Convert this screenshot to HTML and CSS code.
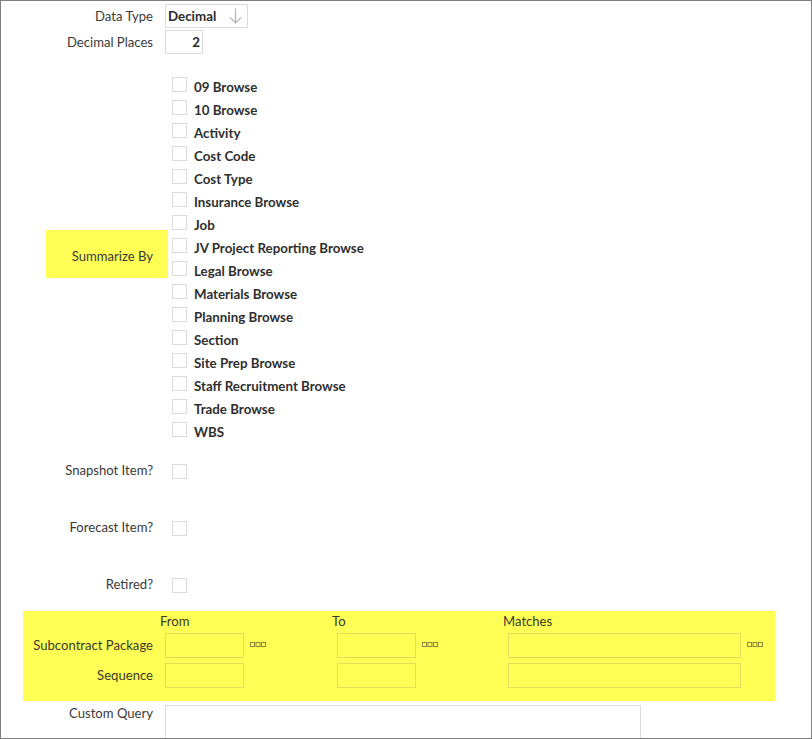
FILE: index.html
```html
<!DOCTYPE html>
<html>
<head>
<meta charset="utf-8">
<link rel="stylesheet" href="styles.css">
</head>
<body>
<div class="frame">
  <div class="row row-type">
    <div class="label">Data Type</div>
    <div class="select">
      <span class="select-value">Decimal</span>
      <svg class="select-arrow" width="13" height="16" viewBox="0 0 13 16"><path d="M6.5 0.5V15M0.8 9.3L6.5 15L12.2 9.3" fill="none" stroke="#b4b4b4" stroke-width="1.2"/></svg>
    </div>
  </div>
  <div class="row row-places">
    <div class="label">Decimal Places</div>
    <div class="num">2</div>
  </div>

  <div class="row row-summarize">
    <div class="label"><div class="hl">Summarize By</div></div>
    <ul class="checklist">
      <li><span class="cb"></span>09 Browse</li>
      <li><span class="cb"></span>10 Browse</li>
      <li><span class="cb"></span>Activity</li>
      <li><span class="cb"></span>Cost Code</li>
      <li><span class="cb"></span>Cost Type</li>
      <li><span class="cb"></span>Insurance Browse</li>
      <li><span class="cb"></span>Job</li>
      <li><span class="cb"></span>JV Project Reporting Browse</li>
      <li><span class="cb"></span>Legal Browse</li>
      <li><span class="cb"></span>Materials Browse</li>
      <li><span class="cb"></span>Planning Browse</li>
      <li><span class="cb"></span>Section</li>
      <li><span class="cb"></span>Site Prep Browse</li>
      <li><span class="cb"></span>Staff Recruitment Browse</li>
      <li><span class="cb"></span>Trade Browse</li>
      <li><span class="cb"></span>WBS</li>
    </ul>
  </div>

  <div class="row row-flag first-flag">
    <div class="label">Snapshot Item?</div>
    <span class="cb single"></span>
  </div>
  <div class="row row-flag">
    <div class="label">Forecast Item?</div>
    <span class="cb single"></span>
  </div>
  <div class="row row-flag">
    <div class="label">Retired?</div>
    <span class="cb single"></span>
  </div>

  <div class="band">
    <div class="band-label"></div>
    <div class="band-head">From</div>
    <div class="band-head">To</div>
    <div class="band-head">Matches</div>

    <div class="band-label">Subcontract Package</div>
    <div class="band-cell"><span class="field short"></span><svg class="dots" width="16" height="5" viewBox="0 0 16 5"><rect x="0.5" y="0.5" width="4" height="4"/><rect x="6" y="0.5" width="4" height="4"/><rect x="11.5" y="0.5" width="4" height="4"/></svg></div>
    <div class="band-cell"><span class="field short"></span><svg class="dots" width="16" height="5" viewBox="0 0 16 5"><rect x="0.5" y="0.5" width="4" height="4"/><rect x="6" y="0.5" width="4" height="4"/><rect x="11.5" y="0.5" width="4" height="4"/></svg></div>
    <div class="band-cell"><span class="field long"></span><svg class="dots" width="16" height="5" viewBox="0 0 16 5"><rect x="0.5" y="0.5" width="4" height="4"/><rect x="6" y="0.5" width="4" height="4"/><rect x="11.5" y="0.5" width="4" height="4"/></svg></div>

    <div class="band-gap"></div>

    <div class="band-label">Sequence</div>
    <div class="band-cell"><span class="field short"></span></div>
    <div class="band-cell"><span class="field short"></span></div>
    <div class="band-cell"><span class="field long"></span></div>
  </div>

  <div class="row row-query">
    <div class="label">Custom Query</div>
    <div class="textarea"></div>
  </div>
</div>
</body>
</html>
```

FILE: styles.css
```css
* { box-sizing: border-box; }
html, body { margin: 0; padding: 0; background: #fff; }
body {
  font-family: Lato, "Open Sans", sans-serif;
  font-size: 13.33px;
  color: #333;
}
.frame {
  width: 812px;
  height: 739px;
  border: 1px solid #7f7f7f;
  overflow: hidden;
}
.row {
  display: flex;
  align-items: center;
}
.label {
  width: 152px;
  flex: none;
  text-align: right;
  margin-right: 12px;
  color: #3a3a3a;
  font-size: 13.1px;
  white-space: nowrap;
}
.row-type { margin-top: 3px; height: 24px; }
.select {
  width: 83px;
  height: 24px;
  border: 1px solid #dcdcdc;
  display: flex;
  align-items: center;
  justify-content: space-between;
  padding: 0 5px 0 2px;
}
.select-value { font-weight: 700; color: #2b2b2b; }
.select-arrow { display: block; margin-bottom: 1px; }
.row-places { margin-top: 2px; height: 24px; }
.num {
  width: 38px;
  height: 24px;
  border: 1px solid #dcdcdc;
  text-align: right;
  padding-right: 2px;
  line-height: 22px;
  font-weight: 700;
  color: #2b2b2b;
}
.row-summarize {
  margin-top: 22px;
  align-items: flex-start;
}
.hl {
  margin-top: 154px;
  margin-left: 45px;
  margin-right: -15px;
  padding: 5px 15px 0 0;
  height: 48px;
  line-height: 43px;
  background: #ffff55;
}
.checklist {
  list-style: none;
  margin: 0;
  padding: 0;
}
.checklist li {
  display: flex;
  align-items: flex-start;
  height: 23px;
  line-height: 23px;
  font-weight: 700;
  color: #2f2f2f;
}
.cb {
  display: block;
  width: 15px;
  height: 15px;
  border: 1px solid #dcdcdc;
  background: #fff;
  flex: none;
}
.checklist .cb {
  margin: 1px 7px 0 7px;
}
.row-flag {
  height: 23px;
  margin-top: 34px;
}
.row-flag.first-flag { margin-top: 15px; }
.row-flag .label { line-height: 23px; }
.cb.single { margin-left: 7px; margin-top: 1px; }

.band {
  margin: 15px 0 0 22px;
  width: 752px;
  height: 90px;
  background: #ffff55;
  display: grid;
  grid-template-columns: 137px 172px 171px 1fr;
  grid-template-rows: 22px 25px 5px 25px;
  color: #3a3a2a;
  font-size: 13.1px;
}
.band-gap { grid-column: 1 / -1; }
.band-head {
  line-height: 18px;
  padding-top: 1px;
  align-self: start;
}
.band-label {
  text-align: right;
  padding-right: 7px;
  line-height: 25px;
  white-space: nowrap;
}
.band-cell {
  display: flex;
  align-items: center;
}
.field {
  display: block;
  height: 25px;
  border: 1px solid #e2dd5a;
  margin-left: 5px;
  margin-right: 6px;
}
.field.short { width: 79px; }
.field.long { width: 233px; }
.dots { display: block; margin-top: -2px; }
.dots rect { fill: none; stroke: #8c8a3a; stroke-width: 1; }

.row-query {
  margin-top: 4px;
  align-items: flex-start;
}
.row-query .label { line-height: 16px; }
.textarea {
  width: 476px;
  height: 70px;
  border: 1px solid #dcdcdc;
}
```
